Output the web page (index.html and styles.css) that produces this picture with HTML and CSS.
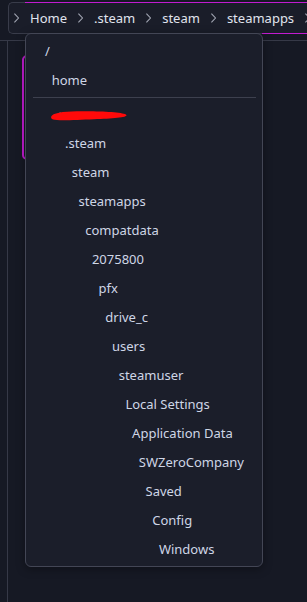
FILE: index.html
```html
<!DOCTYPE html>
<html lang="en">
<head>
    <meta charset="UTF-8">
    <title>Dolphin - steamapps</title>
    <link rel="stylesheet" href="styles.css">
</head>
<body>
    <div class="nav-bar">
        <div class="crumbs">
            <span class="chev"><svg width="5" height="10" viewBox="0 0 5 10"><polyline points="0.4,0.6 4.5,5 0.4,9.4" /></svg></span>
            <span class="crumb">Home</span>
            <span class="chev"><svg width="5" height="10" viewBox="0 0 5 10"><polyline points="0.4,0.6 4.5,5 0.4,9.4" /></svg></span>
            <span class="crumb">.steam</span>
            <span class="chev"><svg width="5" height="10" viewBox="0 0 5 10"><polyline points="0.4,0.6 4.5,5 0.4,9.4" /></svg></span>
            <span class="crumb">steam</span>
            <span class="chev"><svg width="5" height="10" viewBox="0 0 5 10"><polyline points="0.4,0.6 4.5,5 0.4,9.4" /></svg></span>
            <span class="crumb">steamapps</span>
            <span class="chev"><svg width="5" height="10" viewBox="0 0 5 10"><polyline points="0.4,0.6 4.5,5 0.4,9.4" /></svg></span>
        </div>
    </div>

    <div class="panes">
        <div class="places">
            <div class="place-active"></div>
        </div>
    </div>

    <!-- history dropdown of the breadcrumb -->
    <div class="dropdown">
        <div class="item" style="--d:0">/</div>
        <div class="item" style="--d:1">home</div>
        <div class="sep"></div>
        <div class="item redacted" style="--d:2">
            <span class="hidden-name">user</span>
            <svg class="scribble" width="78" height="12" viewBox="0 0 78 12">
                <path d="M2,5.5 C6,1.5 22,1 40,1.3 C58,1.6 74,2.6 76.5,5 C77.5,7.5 62,8.6 44,9.2 C26,9.8 8,11 3,9.4 C0.8,8.6 0.5,6.8 2,5.5 Z" />
            </svg>
        </div>
        <div class="item" style="--d:3">.steam</div>
        <div class="item" style="--d:4">steam</div>
        <div class="item" style="--d:5">steamapps</div>
        <div class="item" style="--d:6">compatdata</div>
        <div class="item" style="--d:7">2075800</div>
        <div class="item" style="--d:8">pfx</div>
        <div class="item" style="--d:9">drive_c</div>
        <div class="item" style="--d:10">users</div>
        <div class="item" style="--d:11">steamuser</div>
        <div class="item" style="--d:12">Local Settings</div>
        <div class="item" style="--d:13">Application Data</div>
        <div class="item" style="--d:14">SWZeroCompany</div>
        <div class="item" style="--d:15">Saved</div>
        <div class="item" style="--d:16">Config</div>
        <div class="item" style="--d:17">Windows</div>
    </div>
</body>
</html>
```

FILE: styles.css
```css
body {
    margin: 0;
    padding: 0;
    font-family: 'Noto Sans', sans-serif;
    font-size: 13px;
    background: #161924;
    color: #cfd6e6;
    height: 602px;
    overflow: hidden;
    position: relative;
    display: flex;
    flex-direction: column;
}

.nav-bar {
    margin: 2px 0 0 8px;
    height: 32px;
    box-sizing: border-box;
    border: 1px solid #393c4a;
    border-right: none;
    border-radius: 5px 0 0 5px;
    background: #1a1d29;
    position: relative;
    flex-shrink: 0;
}

/* focus frame */
.nav-bar::before {
    content: "";
    position: absolute;
    left: 16px;
    right: 0;
    top: -1px;
    border-top: 1px solid #c21bd0;
}

.nav-bar::after {
    content: "";
    position: absolute;
    left: 253px;
    right: 0;
    bottom: -1px;
    border-bottom: 1px solid #c21bd0;
}

.crumbs {
    display: flex;
    align-items: center;
    height: 100%;
    padding-left: 5px;
    gap: 11px;
    overflow: hidden;
}

.crumb {
    color: #e0e4ee;
    white-space: nowrap;
}

.chev {
    display: flex;
    align-items: center;
}

.chev polyline {
    fill: none;
    stroke: #a3a7b4;
    stroke-width: 1.1;
}

.panes {
    margin-top: 6px;
    border-top: 1px solid #363947;
    flex: 1;
    display: flex;
}

.places {
    margin-left: 7px;
    border-left: 1px solid #363947;
    flex: 1;
    padding-top: 14px;
    padding-left: 14px;
}

.place-active {
    width: 30px;
    height: 105px;
    border: 2px solid #c21bd0;
    border-radius: 5px;
    box-sizing: border-box;
}

.dropdown {
    position: absolute;
    left: 25px;
    top: 33px;
    width: 238px;
    height: 534px;
    box-sizing: border-box;
    background: #1b1e2a;
    border: 1px solid #434655;
    border-radius: 6px;
    padding: 3px 0 3px 0;
    box-shadow: 0 2px 10px rgba(0, 0, 0, 0.35);
}

.item {
    height: 29px;
    line-height: 29px;
    padding-left: calc(19px + var(--d) * 6.7px);
    white-space: nowrap;
    position: relative;
}

.sep {
    margin: 2px 6px 2px 7px;
    border-top: 1px solid #3d404e;
}

.hidden-name {
    color: #5a5f6e;
}

.scribble {
    position: absolute;
    left: 24px;
    top: 10px;
}

.scribble path {
    fill: #ff0a0a;
}
```
